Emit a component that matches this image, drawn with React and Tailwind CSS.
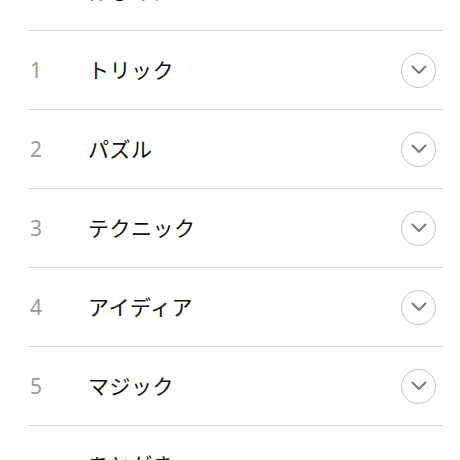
import React from 'react';

const items = [
    { no: '', title: 'はじめに' },
    { no: '1', title: 'トリック' },
    { no: '2', title: 'パズル' },
    { no: '3', title: 'テクニック' },
    { no: '4', title: 'アイディア' },
    { no: '5', title: 'マジック' },
    { no: '', title: 'あとがき' },
];

const App = () => {
    return (
        <div className="w-[460px] h-[460px] overflow-hidden bg-white" style={{ fontFamily: '"Noto Sans", "Noto Sans CJK JP", sans-serif' }}>
            <div className="mt-[-48px] ml-[28px] mr-[17px]">
                {items.map((item, idx) => (
                    <div
                        key={idx}
                        className={`h-[79px] flex items-center ${idx < items.length - 1 ? 'border-b border-[#d6d6d6]' : ''}`}
                    >
                        <span className="w-[60px] pl-[2px] text-[21px] text-[#9a9a9a] leading-none">{item.no}</span>
                        <span className="flex-1 text-[21px] text-[#111] leading-none tracking-[0.5px]">{item.title}</span>
                        {item.no && (
                            <div className="mr-[7px] w-[35px] h-[35px] rounded-full border border-[#c4c4c4] flex items-center justify-center">
                                <svg width="16" height="10" viewBox="0 0 16 10" fill="none">
                                    <path d="M1.5 1.5 L8 8 L14.5 1.5" stroke="#7a7a7a" strokeWidth="2" strokeLinecap="round" strokeLinejoin="round" />
                                </svg>
                            </div>
                        )}
                    </div>
                ))}
            </div>
        </div>
    );
};

export default App;
